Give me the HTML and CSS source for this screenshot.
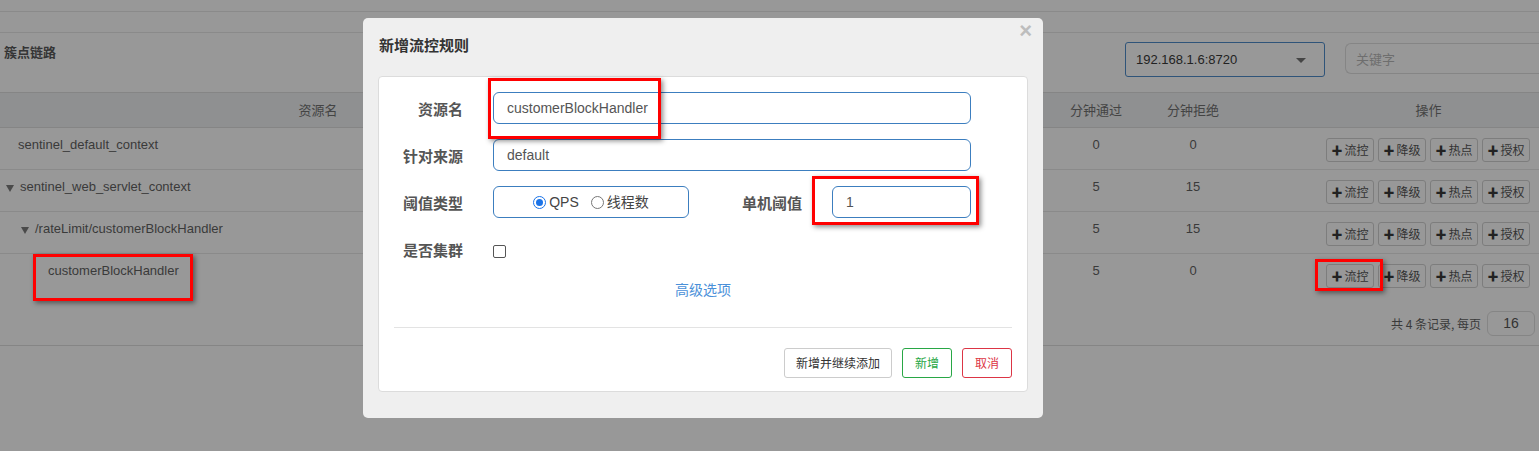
FILE: index.html
```html
<!DOCTYPE html>
<html lang="zh">
<head>
<meta charset="utf-8">
<title>Sentinel</title>
<link rel="stylesheet" href="styles.css">
</head>
<body>
<div class="page">
  <div class="topbar"></div>
  <div class="subbar"></div>
  <div class="toolbar">
    <div class="title">簇点链路</div>
    <div class="tools">
      <div class="select">192.168.1.6:8720<span class="caret"></span></div>
      <div class="search">关键字</div>
    </div>
  </div>
  <div class="table">
    <div class="row head">
      <div class="c c-name center">资源名</div>
      <div class="c"></div>
      <div class="c center">分钟通过</div>
      <div class="c center">分钟拒绝</div>
      <div class="c"></div>
      <div class="c center">操作</div>
    </div>
    <div class="row">
      <div class="c c-name lvl0">sentinel_default_context</div>
      <div class="c"></div>
      <div class="c center">0</div>
      <div class="c center">0</div>
      <div class="c"></div>
      <div class="c ops"><span class="btn"><b>✚</b>流控</span><span class="btn"><b>✚</b>降级</span><span class="btn"><b>✚</b>热点</span><span class="btn"><b>✚</b>授权</span></div>
    </div>
    <div class="row">
      <div class="c c-name lvl1"><span class="tri"></span>sentinel_web_servlet_context</div>
      <div class="c"></div>
      <div class="c center">5</div>
      <div class="c center">15</div>
      <div class="c"></div>
      <div class="c ops"><span class="btn"><b>✚</b>流控</span><span class="btn"><b>✚</b>降级</span><span class="btn"><b>✚</b>热点</span><span class="btn"><b>✚</b>授权</span></div>
    </div>
    <div class="row">
      <div class="c c-name lvl2"><span class="tri"></span>/rateLimit/customerBlockHandler</div>
      <div class="c"></div>
      <div class="c center">5</div>
      <div class="c center">15</div>
      <div class="c"></div>
      <div class="c ops"><span class="btn"><b>✚</b>流控</span><span class="btn"><b>✚</b>降级</span><span class="btn"><b>✚</b>热点</span><span class="btn"><b>✚</b>授权</span></div>
    </div>
    <div class="row last">
      <div class="c c-name lvl3">customerBlockHandler</div>
      <div class="c"></div>
      <div class="c center">5</div>
      <div class="c center">0</div>
      <div class="c"></div>
      <div class="c ops"><span class="btn"><b>✚</b>流控</span><span class="btn"><b>✚</b>降级</span><span class="btn"><b>✚</b>热点</span><span class="btn"><b>✚</b>授权</span></div>
    </div>
    <div class="pager">共 4 条记录, 每页<span class="pagesize">16</span></div>
  </div>

  <div class="modal">
    <div class="modal-head">新增流控规则<span class="close">×</span></div>
    <div class="card">
      <div class="frow">
        <label class="lbl">资源名</label>
        <div class="input wide">customerBlockHandler</div>
      </div>
      <div class="frow">
        <label class="lbl">针对来源</label>
        <div class="input wide">default</div>
      </div>
      <div class="frow">
        <label class="lbl">阈值类型</label>
        <div class="input radios">
          <span class="radio on"></span><span class="rtext">QPS</span>
          <span class="radio"></span><span class="rtext">线程数</span>
        </div>
        <label class="lbl lbl2">单机阈值</label>
        <div class="input small">1</div>
      </div>
      <div class="frow">
        <label class="lbl">是否集群</label>
        <span class="checkbox"></span>
      </div>
      <div class="adv">高级选项</div>
      <div class="divider"></div>
      <div class="foot">
        <span class="mbtn">新增并继续添加</span>
        <span class="mbtn green">新增</span>
        <span class="mbtn red">取消</span>
      </div>
    </div>
  </div>

  <div class="mark m1"></div>
  <div class="mark m2"></div>
  <div class="mark m3"></div>
  <div class="mark m4"></div>
</div>
</body>
</html>
```

FILE: styles.css
```css
* { box-sizing: border-box; }
html, body { margin: 0; padding: 0; }
body {
  background: #989898;
  font-family: "Liberation Sans", Arial, "Noto Sans CJK SC", sans-serif;
  font-size: 13px;
  color: #3a3a3a;
  width: 1539px;
  height: 451px;
  overflow: hidden;
}
.page { position: relative; width: 1539px; height: 451px; }

.topbar { height: 12px; border-bottom: 1px solid #8a8a8a; }
.subbar { height: 21px; border-bottom: 1px solid #8a8a8a; }

.toolbar {
  display: flex;
  justify-content: space-between;
  height: 60px;
  border-bottom: 1px solid #858585;
}
.title {
  font-family: "Noto Sans CJK SC", sans-serif;
  font-weight: bold;
  font-size: 13px;
  color: #353535;
  padding: 9px 0 0 4px;
  line-height: 20px;
}
.tools { display: flex; gap: 20px; padding-top: 9px; }
.select {
  width: 200px; height: 35px;
  border: 1px solid #2f5479;
  border-radius: 3px;
  padding: 0 10px;
  line-height: 33px;
  font-size: 13px;
  color: #222;
  position: relative;
}
.caret {
  position: absolute; right: 18px; top: 15px;
  border-left: 5px solid transparent;
  border-right: 5px solid transparent;
  border-top: 5px solid #454545;
}
.search {
  width: 194px; height: 31px; margin-top: 1px;
  border: 1px solid #858585;
  border-right: none;
  border-radius: 6px 0 0 6px;
  padding: 0 10px;
  line-height: 29px;
  font-family: "Noto Sans CJK SC", sans-serif;
  color: #6e6e6e;
}

.row {
  display: grid;
  grid-template-columns: 636px 412px 96px 98px 76px 221px;
  height: 42px;
  border-bottom: 1px solid #8a8a8a;
}
.row.head {
  height: 35px;
  background: #8f9091;
  border-bottom: 1px solid #858585;
  font-family: "Noto Sans CJK SC", sans-serif;
  color: #444;
}
.row.head .c { line-height: 34px; padding-top: 0; }
.row.last { height: 92px; border-bottom: 1px solid #858585; }
.c { padding-top: 8px; line-height: 17px; white-space: nowrap; }
.center { text-align: center; }
.lvl0 { padding-left: 18px; }
.lvl1 { padding-left: 6px; }
.lvl2 { padding-left: 21px; }
.lvl3 { padding-left: 48px; }
.tri {
  display: inline-block;
  border-left: 4px solid transparent;
  border-right: 4px solid transparent;
  border-top: 7px solid #4a4a4a;
  margin-right: 6px;
  vertical-align: -1px;
}
.ops {
  display: flex; justify-content: flex-end; gap: 4px;
  padding: 10px 9px 0 0;
}
.btn {
  width: 48px; height: 24px;
  border: 1px solid #7d7d7d;
  border-radius: 3px;
  font-family: "Noto Sans CJK SC", sans-serif;
  font-size: 12px;
  line-height: 22px;
  text-align: center;
  color: #333;
}
.btn b { font-size: 11px; margin-right: 2px; color: #222; }

.pager {
  position: relative;
  margin-top: -36px;
  display: flex; justify-content: flex-end; align-items: center;
  gap: 6px;
  padding-right: 4px;
  font-family: "Noto Sans CJK SC", sans-serif;
  font-size: 12px;
  color: #3a3a3a;
  height: 26px;
}
.pagesize {
  width: 48px; height: 25px;
  border: 1px solid #858585;
  border-radius: 6px;
  font-family: "Liberation Sans", sans-serif;
  font-size: 14px;
  line-height: 23px;
  text-align: center;
  color: #333;
}

.modal {
  position: absolute;
  left: 363px; top: 18px;
  width: 680px; height: 400px;
  background: #efefef;
  border-radius: 5px;
  padding: 0 15px;
}
.modal-head {
  position: relative;
  height: 58px;
  padding-top: 17px;
  line-height: 20px;
  font-family: "Noto Sans CJK SC", sans-serif;
  font-weight: bold;
  font-size: 15px;
  color: #333;
  padding-left: 1px;
}
.close {
  position: absolute; right: -4px; top: 3px;
  font-family: "Liberation Sans", sans-serif;
  font-size: 22px; font-weight: bold;
  color: #bdbdbd;
}
.card {
  background: #fff;
  border: 1px solid #dcdcdc;
  border-radius: 4px;
  height: 316px;
  padding: 15px 15px 0 15px;
}
.frow {
  display: flex; align-items: center;
  height: 32px;
  margin-bottom: 15px;
}
.lbl {
  width: 69px;
  text-align: right;
  margin-right: 30px;
  font-family: "Noto Sans CJK SC", sans-serif;
  font-weight: bold;
  font-size: 15px;
  color: #555;
}
.lbl2 { width: 113px; }
.input {
  height: 32px;
  border: 1px solid #3c7ebf;
  border-radius: 6px;
  padding: 0 13px;
  line-height: 30px;
  font-size: 14px;
  color: #555;
}
.wide { width: 478px; }
.small { width: 139px; }
.radios {
  width: 196px;
  display: flex; align-items: center; justify-content: center;
  font-family: "Liberation Sans", "Noto Sans CJK SC", sans-serif;
  padding: 0;
}
.radio {
  width: 13px; height: 13px;
  border: 1px solid #777;
  border-radius: 50%;
  margin-right: 3px;
  position: relative;
}
.radio.on { border-color: #1a73e8; }
.radio.on::after {
  content: ""; position: absolute; left: 2px; top: 2px;
  width: 7px; height: 7px; border-radius: 50%; background: #1a73e8;
}
.rtext { margin-right: 12px; color: #444; }
.rtext:last-child { margin-right: 0; }
.checkbox {
  width: 13px; height: 13px;
  border: 1px solid #555;
  border-radius: 2px;
  margin-top: 4px;
}
.adv {
  text-align: center;
  margin-top: -1px;
  width: 618px;
  font-family: "Noto Sans CJK SC", sans-serif;
  font-size: 14px;
  line-height: 20px;
  color: #4a90d9;
}
.divider {
  margin-top: 28px;
  border-top: 1px solid #e3e3e3;
  width: 618px;
}
.foot {
  display: flex; justify-content: flex-end; gap: 10px;
  width: 618px;
  margin-top: 20px;
}
.mbtn {
  height: 30px;
  border: 1px solid #ccc;
  border-radius: 3px;
  padding: 0 11px;
  line-height: 28px;
  font-family: "Noto Sans CJK SC", sans-serif;
  font-size: 12px;
  color: #333;
  background: #fff;
}
.mbtn.green { border-color: #28a745; color: #28a745; width: 50px; padding: 0; text-align: center; }
.mbtn.red { border-color: #dc3545; color: #dc3545; width: 50px; padding: 0; text-align: center; }

.mark {
  position: absolute;
  border: 3px solid #f00;
  box-shadow: 2px 2px 5px rgba(0,0,0,0.45);
}
.m1 { left: 488px; top: 78px; width: 173px; height: 61px; }
.m2 { left: 812px; top: 176px; width: 167px; height: 49px; }
.m3 { left: 33px; top: 254px; width: 160px; height: 47px; }
.m4 { left: 1315px; top: 259px; width: 68px; height: 32px; }
```
